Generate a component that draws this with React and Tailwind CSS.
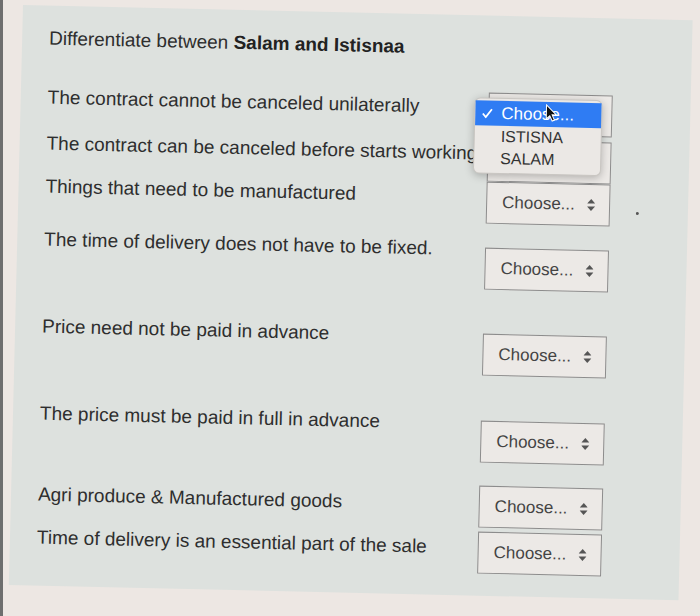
import React from 'react';

const rows = [
  { text: 'The contract cannot be canceled unilaterally', h: 'h-[47px]', lm: 'mt-[4px]', sm: 'mt-0', open: true },
  { text: 'The contract can be canceled before starts working', h: 'h-[42px]', lm: 'mt-[3px]', sm: 'mt-0' },
  { text: 'Things that need to be manufactured', h: 'h-[56px]', lm: 'mt-[4px]', sm: 'mt-0' },
  { text: 'The time of delivery does not have to be fixed.', h: 'h-[88px]', lm: 'mt-[1px]', sm: 'mt-[10px]' },
  { text: 'Price need not be paid in advance', h: 'h-[87px]', lm: 'mt-0', sm: 'mt-[8px]' },
  { text: 'The price must be paid in full in advance', h: 'h-[73px]', lm: 'mt-0', sm: 'mt-[8px]' },
  { text: 'Agri produce & Manufactured goods', h: 'h-[46px]', lm: 'mt-[8px]', sm: 'mt-0' },
  { text: 'Time of delivery is an essential part of the sale', h: 'h-[46px]', lm: 'mt-[5px]', sm: 'mt-0' }
];

function UpDown() {
  return (
    <svg width="8" height="12" viewBox="0 0 8 12" className="shrink-0">
      <polygon points="4,0 8,4.5 0,4.5" fill="#555" />
      <polygon points="0,7.5 8,7.5 4,12" fill="#555" />
    </svg>
  );
}

function Cursor() {
  return (
    <svg width="12" height="18" viewBox="0 0 12 18">
      <path d="M1 1 L1 15 L4.5 11.8 L7 17 L9.2 16 L6.8 10.8 L11 10.8 Z" fill="#111" stroke="#fff" strokeWidth="1" />
    </svg>
  );
}

function Menu() {
  return (
    <div className="absolute left-[-14px] top-[5px] z-10 w-[128px] rounded-[6px] bg-[#ebe8e5] pt-[2px] pb-[3px] shadow-[0_2px_8px_rgba(0,0,0,0.25)] border border-[#c9c6c2] text-[16px] leading-[22px]">
      <div className="relative flex h-[25px] items-center bg-[#2f7cf3] text-[17px] text-white">
        <svg width="12" height="11" viewBox="0 0 12 11" className="ml-[6px] mr-[8px]">
          <polyline points="1.5,6 4.5,9.5 10.5,1.5" fill="none" stroke="#fff" strokeWidth="1.8" />
        </svg>
        <span>Choose...</span>
        <div className="absolute left-[70px] top-[2px]">
          <Cursor />
        </div>
      </div>
      <div className="flex h-[22px] items-center pl-[26px] text-[#333]">ISTISNA</div>
      <div className="flex h-[22px] items-center pl-[26px] text-[#333]">SALAM</div>
    </div>
  );
}

function Select({ open }) {
  return (
    <div className="relative">
      <div className="flex h-[42px] w-[124px] items-center justify-between border border-[#8c8c8c] bg-[#ece9e6] pl-[15px] pr-[14px] text-[17px] text-[#444]">
        <span>Choose...</span>
        <UpDown />
      </div>
      {open && <Menu />}
    </div>
  );
}

export default function App() {
  return (
    <div className="relative h-[616px] w-[700px] overflow-hidden border-l-[3px] border-[#6e6e6e] bg-[#ede7e3] font-['Liberation_Sans',Arial,sans-serif]">
      <div className="relative ml-[20px] mt-[5px] h-[580px] w-[670px] origin-top-left skew-x-[-1.4deg] skew-y-[1.3deg] bg-[#dde1de] pl-[27px] pt-[22px]">
        {/* Question */}
        <div className="h-[22px] whitespace-nowrap text-[19px] leading-[22px] text-[#2e2e2e]">
          Differentiate between <span className="font-bold text-[#222]">Salam and Istisnaa</span>
        </div>

        {/* Matching rows */}
        <div className="mt-[33px]">
          {rows.map((row, i) => (
            <div key={i} className={`flex items-start ${row.h}`}>
              <div className={`w-[441px] shrink-0 whitespace-nowrap text-[19px] leading-[22px] text-[#2e2e2e] ${row.lm}`}>
                {row.text}
              </div>
              <div className={row.sm}>
                <Select open={row.open} />
              </div>
            </div>
          ))}
        </div>

        <div className="absolute left-[618px] top-[193px] h-[3px] w-[3px] rounded-full bg-[#555]" />
      </div>
    </div>
  );
}
